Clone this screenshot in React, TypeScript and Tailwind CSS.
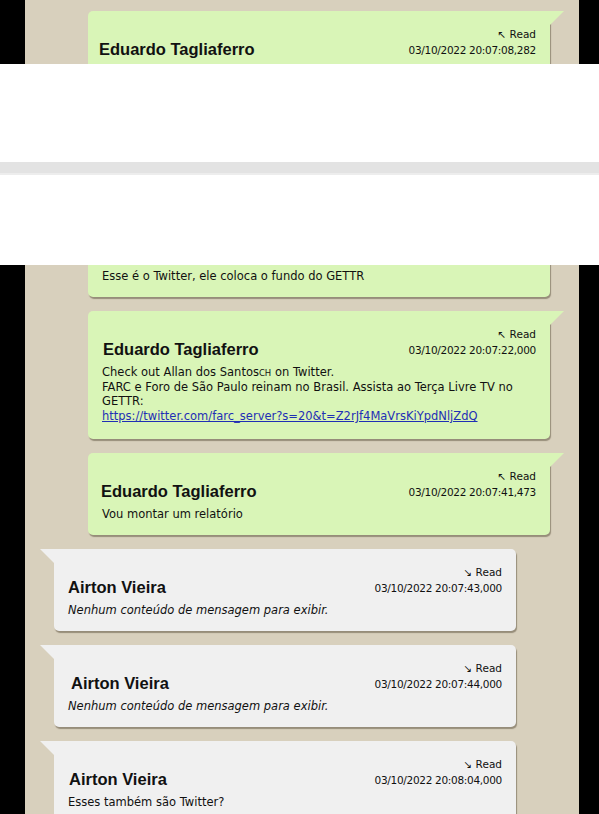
import React from "react";

type BubbleProps = {
  out: boolean;
  name: string;
  time: string;
  nameCls?: string;
  children: React.ReactNode;
};

const bodyFont = { fontFamily: '"DejaVu Sans", Verdana, sans-serif' };
const nameFont = { fontFamily: '"Liberation Sans", Arial, sans-serif' };

function Bubble({ out, name, time, nameCls = "", children }: BubbleProps) {
  return (
    <div
      className={
        out
          ? "relative w-[462px] ml-auto mr-[29px] shrink-0"
          : "relative w-[462px] ml-[29px] shrink-0"
      }
    >
      {/* corner tail */}
      <svg
        width="14"
        height="14"
        viewBox="0 0 14 14"
        className={out ? "absolute top-0 right-[-14px]" : "absolute top-0 left-[-14px]"}
      >
        <polygon
          points={out ? "0,0 14,0 0,14" : "0,0 14,0 14,14"}
          fill={out ? "#d9f5b7" : "#f0f0f0"}
        />
      </svg>
      <div
        className={
          out
            ? "bg-[#d9f5b7] rounded-tl-[5px] rounded-b-[5px] pt-4 pb-[14px] px-[14px] text-[#111] shadow-[1px_2px_1px_rgba(70,60,40,0.45)]"
            : "bg-[#f0f0f0] rounded-tr-[5px] rounded-b-[5px] pt-4 pb-[14px] px-[14px] text-[#111] shadow-[1px_2px_1px_rgba(70,60,40,0.45)]"
        }
      >
        <div className="flex items-end justify-between">
          <div
            className={`font-bold text-[16.5px] leading-[20px] mb-[-2px] ${nameCls}`}
            style={nameFont}
          >
            {name}
          </div>
          <div className="text-right text-[10.5px] leading-[14px]" style={bodyFont}>
            <div>{out ? "↖" : "↘"} Read</div>
            <div className="mt-[2px] tracking-[-0.3px]">{time}</div>
          </div>
        </div>
        <div className="mt-2 text-[11.5px] leading-[14px]" style={bodyFont}>
          {children}
        </div>
      </div>
    </div>
  );
}

function ChatPane({ className, children }: { className: string; children: React.ReactNode }) {
  return (
    <div className={`flex overflow-hidden ${className}`}>
      <div className="w-[25px] shrink-0 bg-black" />
      <div className="flex-1 bg-[#d8d0bd] overflow-hidden">{children}</div>
      <div className="w-[20px] shrink-0 bg-black" />
    </div>
  );
}

export default function App() {
  return (
    <div className="w-[599px] h-[814px] overflow-hidden bg-white flex flex-col">
      <ChatPane className="h-[64px] shrink-0">
        <div className="pt-[11px]">
          <Bubble out name="Eduardo Tagliaferro" time="03/10/2022 20:07:08,282" nameCls="ml-[-3px]">
            Esse é o Twitter, ele coloca o fundo do GETTR
          </Bubble>
        </div>
      </ChatPane>

      <div className="h-[98px] shrink-0 bg-white" />
      <div className="h-[13px] shrink-0 bg-[#e3e3e3] border-b-2 border-[#ededed]" />
      <div className="h-[90px] shrink-0 bg-white" />

      <ChatPane className="h-[549px] shrink-0">
        <div className="mt-[-50px] flex flex-col gap-[14px]">
          <Bubble out name="Eduardo Tagliaferro" time="03/10/2022 20:07:08,282" nameCls="ml-[-3px]">
            Esse é o Twitter, ele coloca o fundo do GETTR
          </Bubble>

          <Bubble out name="Eduardo Tagliaferro" time="03/10/2022 20:07:22,000" nameCls="ml-[1px]">
            Check out Allan dos Santos<span className="text-[8.5px]">CH</span> on Twitter.
            <br />
            FARC e Foro de São Paulo reinam no Brasil. Assista ao Terça Livre TV no
            <br />
            GETTR:
            <br />
            <a
              href="#"
              className="text-[#1f2fb5] underline leading-[17px] inline-block"
            >
              https://twitter.com/farc_server?s=20&amp;t=Z2rJf4MaVrsKiYpdNljZdQ
            </a>
          </Bubble>

          <Bubble out name="Eduardo Tagliaferro" time="03/10/2022 20:07:41,473" nameCls="ml-[-1px]">
            Vou montar um relatório
          </Bubble>

          <Bubble out={false} name="Airton Vieira" time="03/10/2022 20:07:43,000">
            <i>Nenhum conteúdo de mensagem para exibir.</i>
          </Bubble>

          <Bubble out={false} name="Airton Vieira" time="03/10/2022 20:07:44,000" nameCls="ml-[3px]">
            <i>Nenhum conteúdo de mensagem para exibir.</i>
          </Bubble>

          <Bubble out={false} name="Airton Vieira" time="03/10/2022 20:08:04,000" nameCls="ml-[1px]">
            Esses também são Twitter?
          </Bubble>
        </div>
      </ChatPane>
    </div>
  );
}
